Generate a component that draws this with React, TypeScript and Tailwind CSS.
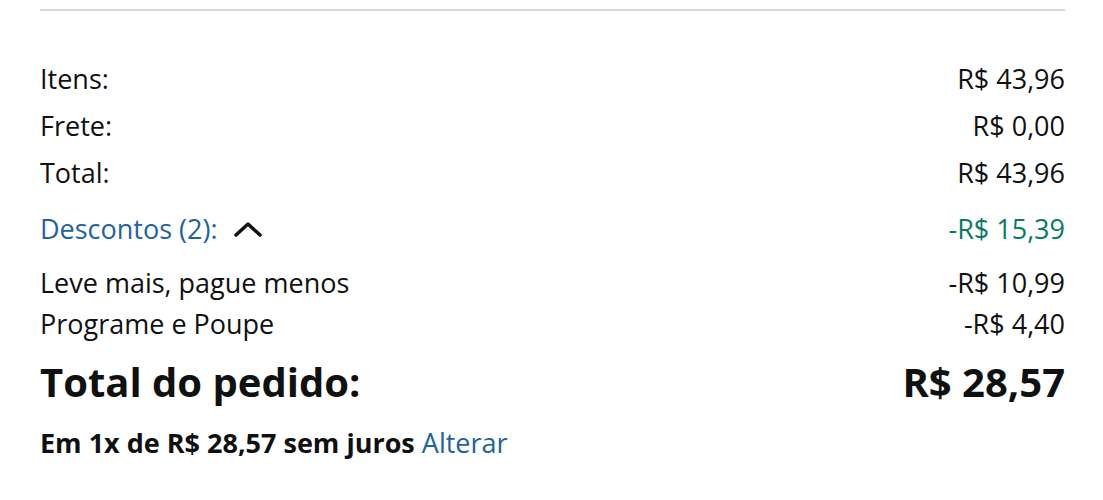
export default function App() {
  const font = { fontFamily: '"Open Sans", "Noto Sans", Arial, sans-serif' };

  return (
    <div className="w-[1103px] h-[500px] bg-white text-[#0f1111]" style={font}>
      <div className="pl-[40px] pr-[38px] pt-[9px]">
        <div className="h-[2px] bg-[#d5d9d9]" />

        {/* 합계 */}
        <div className="mt-[51px] flex flex-col text-[27px] leading-[34px]">
          <div className="flex justify-between h-[47px] items-start">
            <span>Itens:</span>
            <span>R$ 43,96</span>
          </div>
          <div className="flex justify-between h-[47px] items-start">
            <span>Frete:</span>
            <span>R$ 0,00</span>
          </div>
          <div className="flex justify-between h-[56px] items-start">
            <span>Total:</span>
            <span>R$ 43,96</span>
          </div>
          <div className="flex justify-between h-[54px] items-start">
            <span className="flex items-center gap-[15px] text-[#2162a1]">
              Descontos (2):
              <svg width="30" height="18" viewBox="0 0 30 18" fill="none">
                <path d="M3 15 L15 4 L27 15" stroke="#0f1111" strokeWidth="3.5" strokeLinecap="round" strokeLinejoin="round" />
              </svg>
            </span>
            <span className="text-[#067d62]">-R$ 15,39</span>
          </div>
          <div className="flex justify-between h-[41px] items-start">
            <span>Leve mais, pague menos</span>
            <span>-R$ 10,99</span>
          </div>
          <div className="flex justify-between h-[40px] items-start">
            <span>Programe e Poupe</span>
            <span>-R$ 4,40</span>
          </div>
        </div>

        {/* 주문 총액 */}
        <div className="mt-[9px] flex justify-between items-center font-bold text-[40px] leading-[52px]">
          <span>Total do pedido:</span>
          <span>R$ 28,57</span>
        </div>
        <div className="mt-[18px] text-[27px] leading-[34px]">
          <span className="font-bold">Em 1x de R$ 28,57 sem juros</span>{' '}
          <span className="text-[#2162a1]">Alterar</span>
        </div>
      </div>
    </div>
  );
}
